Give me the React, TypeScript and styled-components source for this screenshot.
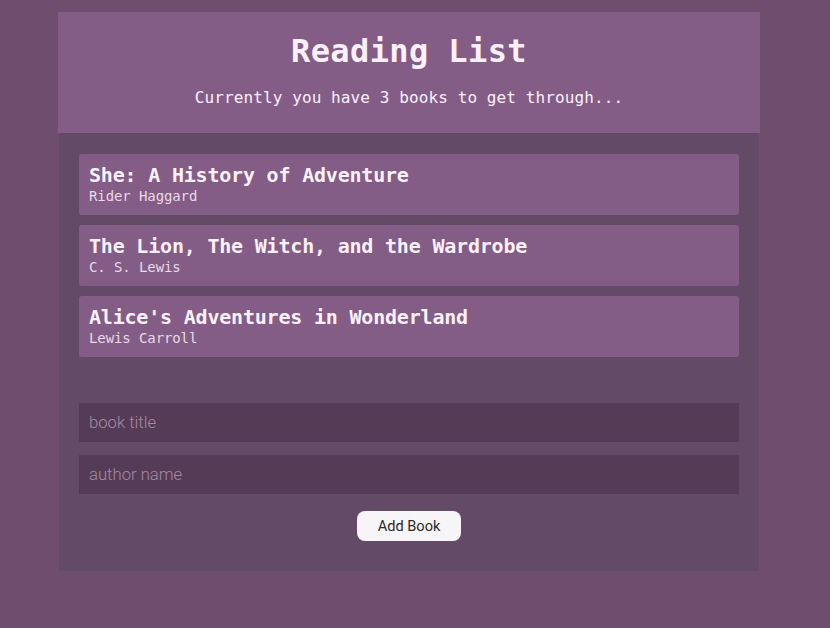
import React from "react";
import styled, { createGlobalStyle } from "styled-components";

const Global = createGlobalStyle`
  html, body { margin: 0; padding: 0; }
  body {
    background: #6e4d6e;
    font-family: "DejaVu Sans Mono", "Liberation Mono", monospace;
    min-height: 628px;
  }
`;

const Page = styled.div`
  padding: 12px 0 0 59px;
`;

const Panel = styled.div`
  width: 700px;
  background: #634a66;
  padding-bottom: 30px;
`;

const Header = styled.header`
  background: #835d85;
  margin: 0 -1px;
  height: 121px;
  box-sizing: border-box;
  padding-top: 19px;
  text-align: center;
  color: #fcf1fb;
`;

const Title = styled.h1`
  margin: 0;
  font-size: 32px;
  line-height: 40px;
  font-weight: 700;
  letter-spacing: 0.4px;
`;

const Subtitle = styled.p`
  margin: 17px 0 0;
  font-size: 16px;
  line-height: 20px;
  letter-spacing: 0.1px;
`;

const List = styled.ul`
  list-style: none;
  margin: 0;
  padding: 21px 20px 0;
  display: flex;
  flex-direction: column;
  gap: 10px;
`;

const Card = styled.li`
  background: #835d85;
  border-radius: 3px;
  height: 61px;
  box-sizing: border-box;
  padding: 9px 10px 0;
  color: #fcf1fb;
`;

const BookTitle = styled.div`
  font-size: 20px;
  line-height: 24px;
  font-weight: 700;
  letter-spacing: -0.2px;
`;

const Author = styled.div`
  margin-top: 1px;
  font-size: 14px;
  line-height: 17px;
  color: #ead9e8;
  letter-spacing: -0.1px;
`;

const Form = styled.form`
  padding: 46px 20px 0;
  display: flex;
  flex-direction: column;
  gap: 13px;
  align-items: center;
`;

const Input = styled.input`
  width: 100%;
  height: 39px;
  box-sizing: border-box;
  border: none;
  outline: none;
  background: #553b56;
  padding: 0 10px;
  font-family: Roboto, "Liberation Sans", sans-serif;
  font-weight: 300;
  font-size: 16.7px;
  color: #f0e0f0;
  &::placeholder { color: #a48ca4; }
`;

const Button = styled.button`
  margin-top: 4px;
  width: 104px;
  height: 30px;
  border: none;
  border-radius: 8px;
  background: #f8f5f8;
  color: #2a2a2a;
  font-family: Roboto, "Liberation Sans", sans-serif;
  font-size: 14.6px;
  cursor: pointer;
`;

const books = [
  { title: "She: A History of Adventure", author: "Rider Haggard" },
  { title: "The Lion, The Witch, and the Wardrobe", author: "C. S. Lewis" },
  { title: "Alice's Adventures in Wonderland", author: "Lewis Carroll" },
];

export default function App() {
  return (
    <>
      <Global />
      <Page>
        <Panel>
          <Header>
            <Title>Reading List</Title>
            <Subtitle>Currently you have {books.length} books to get through...</Subtitle>
          </Header>
          <List>
            {books.map((b) => (
              <Card key={b.title}>
                <BookTitle>{b.title}</BookTitle>
                <Author>{b.author}</Author>
              </Card>
            ))}
          </List>
          <Form onSubmit={(e) => e.preventDefault()}>
            <Input placeholder="book title" />
            <Input placeholder="author name" />
            <Button type="submit">Add Book</Button>
          </Form>
        </Panel>
      </Page>
    </>
  );
}
